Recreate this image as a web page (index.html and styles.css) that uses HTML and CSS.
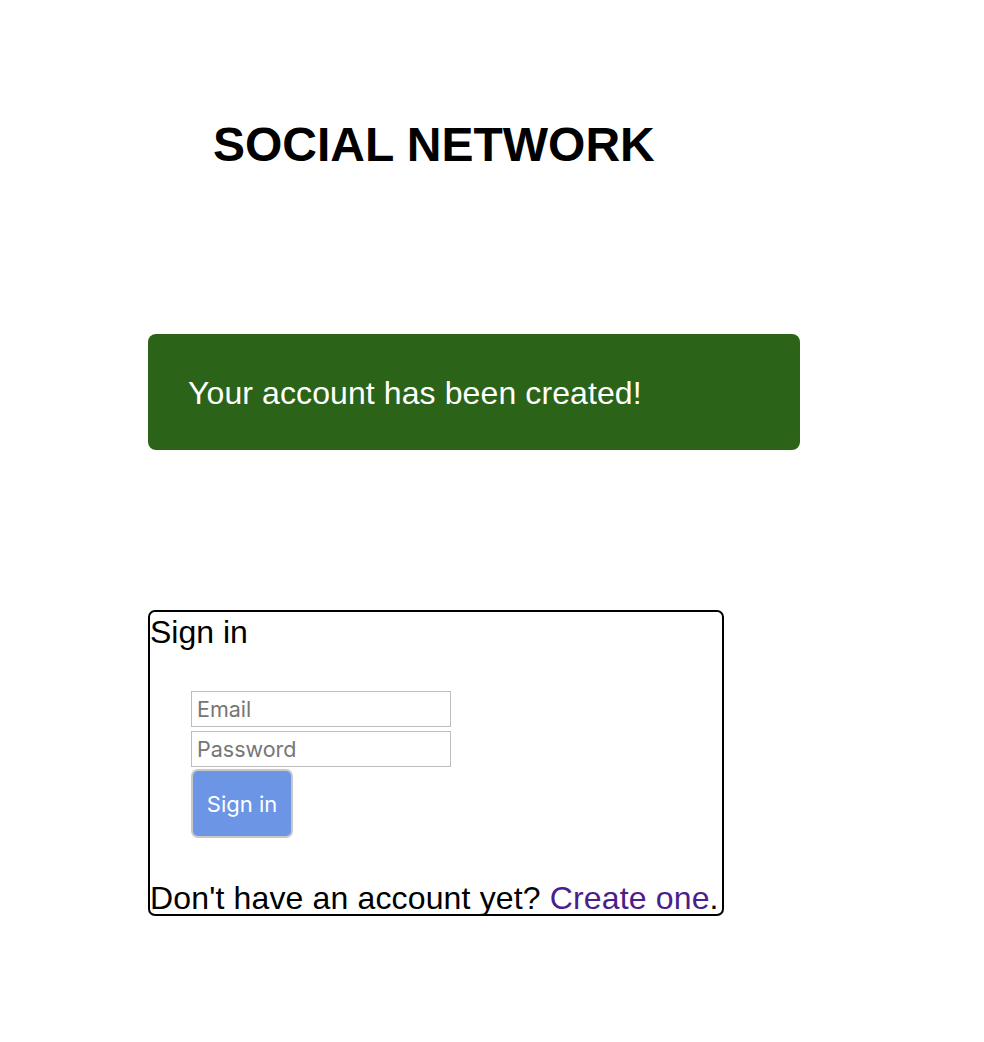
FILE: index.html
```html
<!DOCTYPE html>
<html>
<head>
<meta charset="utf-8">
<link rel="stylesheet" href="styles.css">
</head>
<body>
<div class="page">
  <h1 class="title">SOCIAL NETWORK</h1>
  <div class="alert">Your account has been created!</div>
  <div class="card">
    <h2 class="card-title">Sign in</h2>
    <form class="form">
      <input class="field" type="email" placeholder="Email">
      <input class="field" type="password" placeholder="Password">
      <button class="btn" type="button">Sign in</button>
    </form>
    <p class="foot">Don't have an account yet? <a class="link" href="#">Create one</a>.</p>
  </div>
</div>
</body>
</html>
```

FILE: styles.css
```css
html, body {
  margin: 0;
  padding: 0;
  background: #fff;
}
body {
  font-family: "Liberation Sans", Arial, sans-serif;
  color: #000;
}
.page {
  padding: 117px 0 0 148px;
  display: flex;
  flex-direction: column;
  align-items: flex-start;
}
.title {
  margin: 0 0 0 65px;
  font-size: 48px;
  font-weight: 700;
  line-height: 55px;
}
.alert {
  margin-top: 162px;
  width: 572px;
  padding: 41px 40px 39px;
  background: #2b6319;
  color: #fff;
  font-size: 32px;
  line-height: 36px;
  letter-spacing: 0.1px;
  border-radius: 8px;
}
.card {
  margin-top: 160px;
  width: 572px;
  border: 2px solid #000;
  border-radius: 7px;
  display: flex;
  flex-direction: column;
  align-items: flex-start;
}
.card-title {
  margin: 0;
  padding-top: 2px;
  font-size: 32px;
  font-weight: 400;
  line-height: 37px;
}
.form {
  margin: 40px 0 44px 41px;
  display: flex;
  flex-direction: column;
  align-items: flex-start;
  gap: 4px;
}
.field {
  box-sizing: border-box;
  width: 260px;
  height: 36px;
  margin: 0;
  padding: 0 5px;
  border: 1px solid #bdbdbd;
  border-radius: 0;
  font-family: Inter, "Noto Sans", sans-serif;
  font-size: 21.5px;
  color: #000;
  outline: none;
}
.field::placeholder {
  color: #767676;
}
.btn {
  box-sizing: border-box;
  width: 102px;
  height: 69px;
  margin-top: -2px;
  padding: 0;
  background: #6c95e5;
  border: 2px solid #c8c8c8;
  border-radius: 7px;
  color: #fff;
  font-family: Inter, "Noto Sans", sans-serif;
  font-size: 22px;
}
.foot {
  margin: 0;
  font-size: 32px;
  line-height: 32px;
  letter-spacing: 0.15px;
}
.link {
  color: #4c1d8c;
  text-decoration: none;
}
```
